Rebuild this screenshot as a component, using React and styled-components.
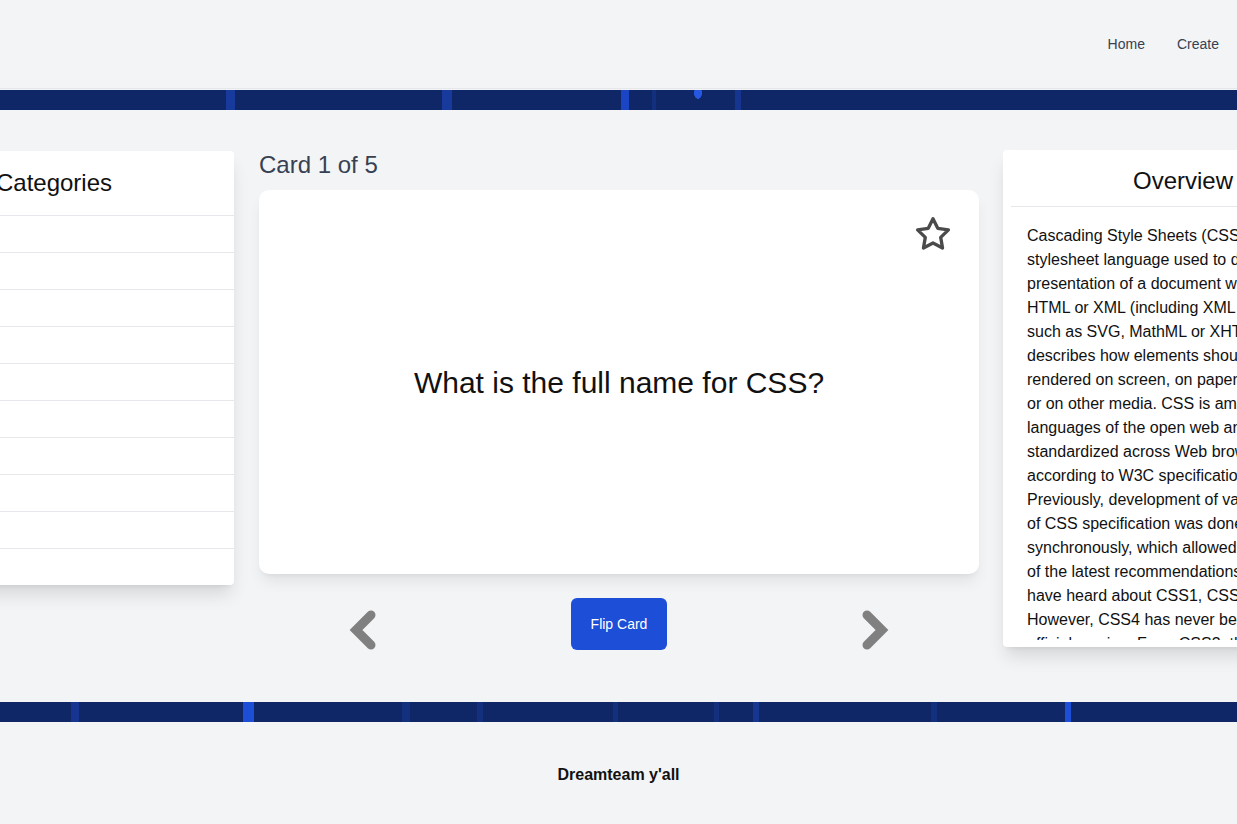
import styled, { createGlobalStyle } from "styled-components";

const GlobalStyle = createGlobalStyle`
  html, body {
    margin: 0;
    padding: 0;
    background: #f3f4f6;
    font-family: "Liberation Sans", Arial, sans-serif;
    overflow-x: hidden;
  }
`;

const Header = styled.header`
  height: 88px;
  display: flex;
  align-items: center;
  justify-content: flex-end;
  gap: 32px;
  padding-right: 18px;
  border-bottom: 1px solid #e5e7eb;
  margin-bottom: 1px;
`;

const NavLink = styled.a`
  font-size: 14px;
  color: #374151;
  text-decoration: none;
  cursor: pointer;
`;

const stripe = (from, to, color) =>
  `linear-gradient(to right, transparent ${from}px, ${color} ${from}px, ${color} ${to}px, transparent ${to}px)`;

const TopBar = styled.div`
  height: 20px;
  background-color: #0f2667;
  background-image: radial-gradient(ellipse 4px 6px at 698px 3px, #2557e0 95%, transparent 100%),
    ${stripe(226, 235, "#173a9c")}, ${stripe(442, 452, "#173a9c")},
    ${stripe(621, 629, "#1b45c4")}, ${stripe(652, 656, "#13307f")},
    ${stripe(735, 741, "#163591")};
`;

const BottomBar = styled.div`
  height: 20px;
  background-color: #0f2667;
  background-image: ${stripe(71, 79, "#163591")}, ${stripe(243, 254, "#1d4ed8")},
    ${stripe(402, 410, "#13307f")}, ${stripe(477, 483, "#13307f")},
    ${stripe(613, 618, "#13307f")}, ${stripe(714, 719, "#13307f")},
    ${stripe(753, 759, "#163591")}, ${stripe(931, 937, "#13307f")},
    ${stripe(1065, 1071, "#1d4ed8")};
`;

const Main = styled.main`
  display: flex;
  justify-content: center;
  align-items: flex-start;
  gap: 24px;
  padding: 40px 0 52px;
  overflow: hidden;
`;

const Panel = styled.aside`
  flex: 0 0 360px;
  width: 360px;
  background: #fff;
  border-radius: 4px;
  box-shadow: 0 12px 18px -3px rgba(0, 0, 0, 0.12), 0 4px 6px -4px rgba(0, 0, 0, 0.1);
  margin-top: ${(p) => p.$offset || 0}px;
`;

const CategoryTitle = styled.h2`
  margin: 0;
  height: 64px;
  display: flex;
  align-items: center;
  justify-content: center;
  font-size: 24px;
  font-weight: 400;
  color: #111;
  border-bottom: 1px solid #e5e7eb;
`;

const CategoryRow = styled.div`
  height: 36px;
  & + & {
    border-top: 1px solid #e5e7eb;
  }
`;

const Center = styled.section`
  flex: 0 0 720px;
  margin-left: 1px;
  padding-top: 1px;
`;

const CardLabel = styled.div`
  font-size: 24px;
  line-height: 28px;
  color: #374151;
  margin-bottom: 11px;
`;

const Card = styled.div`
  position: relative;
  height: 384px;
  background: #fff;
  border-radius: 10px;
  box-shadow: 0 10px 15px -3px rgba(0, 0, 0, 0.08), 0 4px 6px -4px rgba(0, 0, 0, 0.08);
  display: flex;
  align-items: center;
  justify-content: center;
`;

const Question = styled.p`
  margin: 0;
  padding-top: 2px;
  font-size: 30px;
  color: #111;
`;

const StarButton = styled.button`
  position: absolute;
  top: 24px;
  right: 26px;
  padding: 0;
  border: 0;
  background: none;
  cursor: pointer;
  line-height: 0;
`;

const Controls = styled.div`
  display: flex;
  justify-content: center;
  align-items: center;
  gap: 194px;
  margin-top: 24px;
`;

const Arrow = styled.button`
  padding: 0;
  border: 0;
  background: none;
  cursor: pointer;
  line-height: 0;
  margin-top: 12px;
`;

const FlipButton = styled.button`
  width: 96px;
  height: 52px;
  border: 0;
  border-radius: 6px;
  background: #1d4ed8;
  color: #fff;
  font-family: "Liberation Sans", Arial, sans-serif;
  font-size: 14px;
  cursor: pointer;
`;

const OverviewTitle = styled.h2`
  margin: 0 8px;
  padding: 17px 0 11px;
  font-size: 24px;
  line-height: 28px;
  font-weight: 400;
  text-align: center;
  color: #111;
  border-bottom: 1px solid #e5e7eb;
`;

const OverviewBody = styled.div`
  height: 433px;
  overflow: hidden;
  margin-bottom: 7px;
  padding: 17px 34px 0 24px;
  box-sizing: border-box;
  font-size: 16px;
  line-height: 24px;
  color: #111;
`;

const Footer = styled.footer`
  padding: 44px 0 40px;
  text-align: center;
  font-size: 16px;
  font-weight: 700;
  line-height: 18px;
  color: #111;
`;

const Star = () => (
  <svg width="40" height="40" viewBox="0 0 24 24" fill="none" stroke="#4b4b4b" strokeWidth="2" strokeLinejoin="round">
    <path d="M12 2.8l2.85 5.8 6.4.93-4.63 4.5 1.1 6.37L12 17.4l-5.72 3 1.1-6.37-4.63-4.5 6.4-.93z" />
  </svg>
);

const Chevron = ({ dir }) => (
  <svg width="28" height="40" viewBox="0 0 28 40">
    <polyline
      points={dir === "left" ? "22,5 7,20 22,35" : "6,5 21,20 6,35"}
      fill="none"
      stroke="#808080"
      strokeWidth="9"
      strokeLinecap="round"
      strokeLinejoin="miter"
    />
  </svg>
);

const overview =
  "Cascading Style Sheets (CSS) is a stylesheet language used to describe the presentation of a document written in HTML or XML (including XML dialects such as SVG, MathML or XHTML). CSS describes how elements should be rendered on screen, on paper, in speech, or on other media. CSS is among the core languages of the open web and is standardized across Web browsers according to W3C specifications. Previously, development of various parts of CSS specification was done synchronously, which allowed versioning of the latest recommendations. You might have heard about CSS1, CSS2.1, CSS3. However, CSS4 has never become an official version. From CSS3, the scope of the specification increased significantly and the progress on different CSS modules started to differ so much, that it became more effective to develop and release recommendations separately per module. Instead of versioning the CSS specification, W3C now periodically takes a snapshot of the latest stable state of the CSS specification and progress of individual modules.";

const App = () => {
  const rows = Array.from({ length: 10 });

  return (
    <>
      <GlobalStyle />
      <Header>
        <NavLink>Home</NavLink>
        <NavLink>Create</NavLink>
      </Header>
      <TopBar />
      <Main>
        <Panel $offset={1}>
          <CategoryTitle>Categories</CategoryTitle>
          {rows.map((_, i) => (
            <CategoryRow key={i} />
          ))}
        </Panel>
        <Center>
          <CardLabel>Card 1 of 5</CardLabel>
          <Card>
            <StarButton aria-label="favorite">
              <Star />
            </StarButton>
            <Question>What is the full name for CSS?</Question>
          </Card>
          <Controls>
            <Arrow aria-label="previous">
              <Chevron dir="left" />
            </Arrow>
            <FlipButton>Flip Card</FlipButton>
            <Arrow aria-label="next">
              <Chevron dir="right" />
            </Arrow>
          </Controls>
        </Center>
        <Panel>
          <OverviewTitle>Overview</OverviewTitle>
          <OverviewBody>{overview}</OverviewBody>
        </Panel>
      </Main>
      <BottomBar />
      <Footer>Dreamteam y'all</Footer>
    </>
  );
};

export default App;
